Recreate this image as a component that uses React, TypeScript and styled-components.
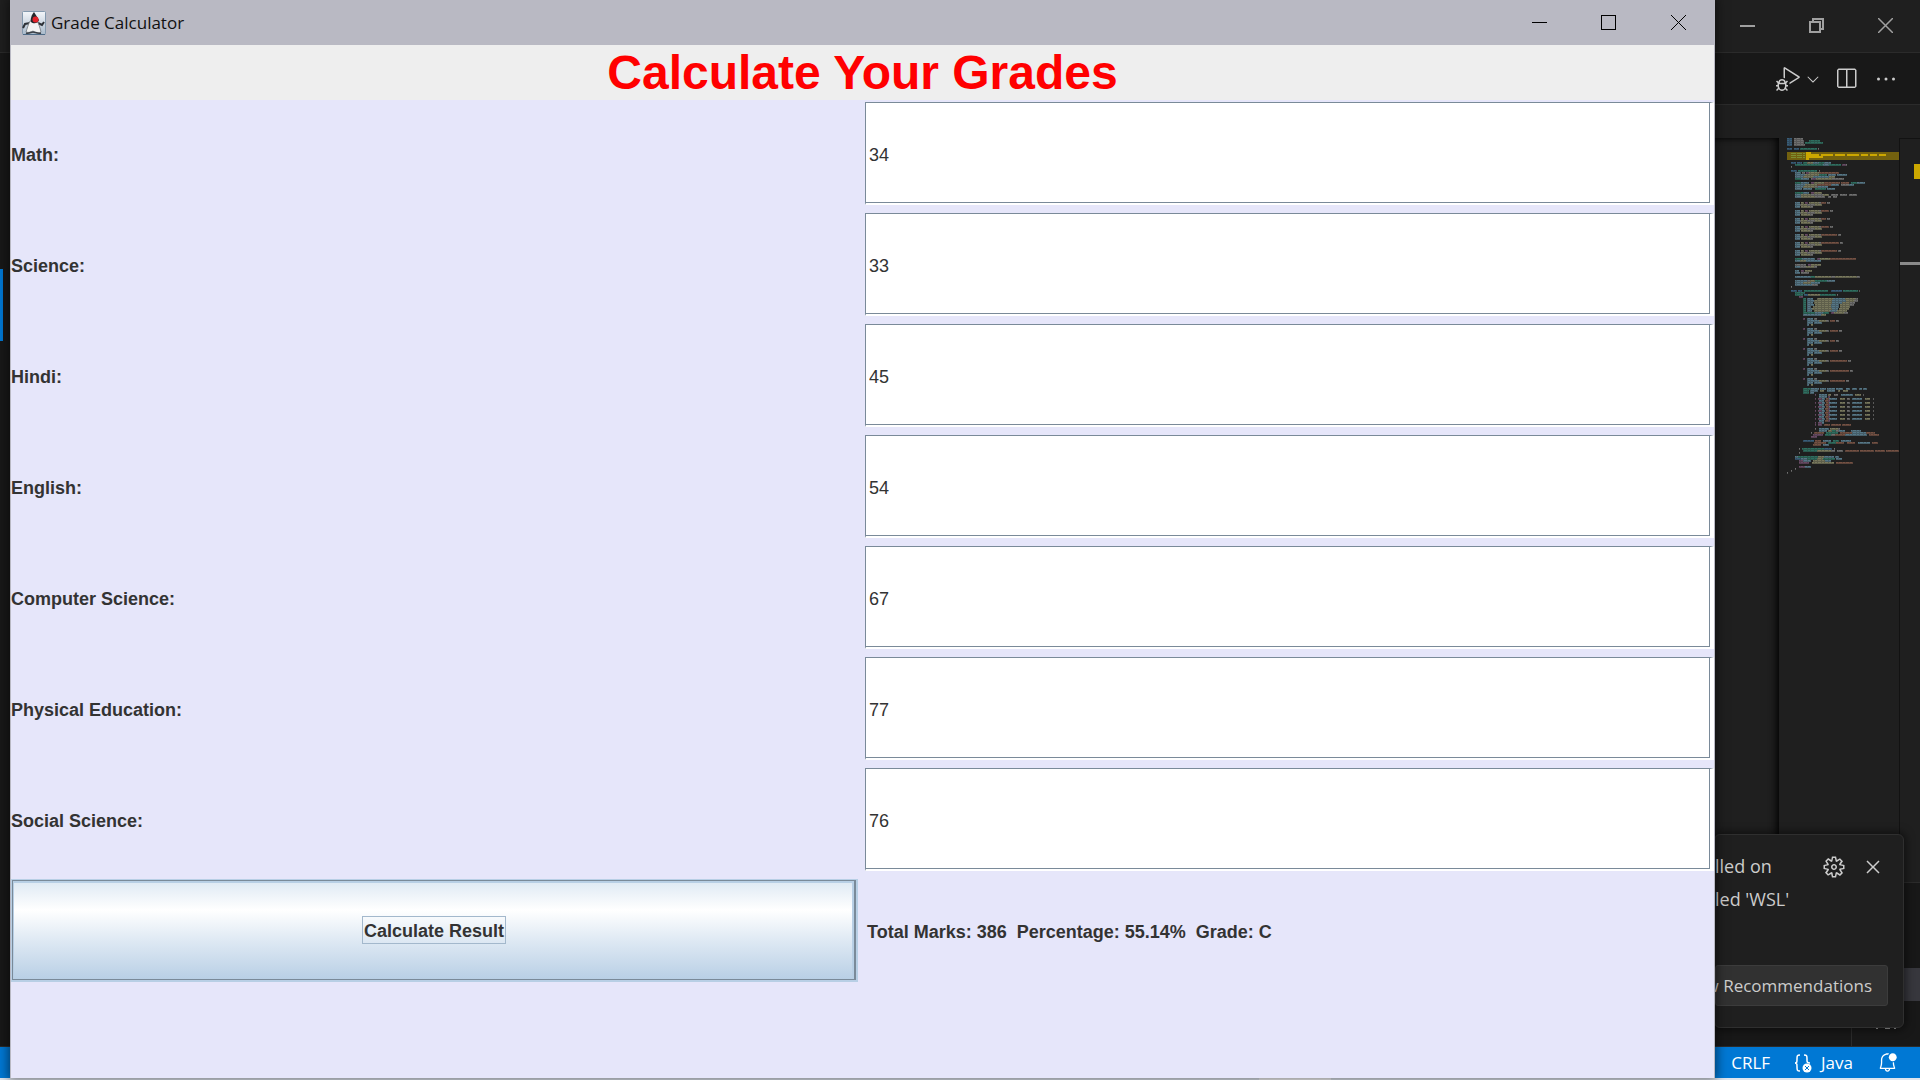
import React, { useState } from "react";
import styled, { createGlobalStyle } from "styled-components";
import {
  VscBellDot,
  VscChevronDown,
  VscClose,
  VscDebugAlt,
  VscEllipsis,
  VscGear,
  VscSplitHorizontal,
} from "react-icons/vsc";

const UI_FONT = `"Segoe UI", "Open Sans", "Noto Sans", sans-serif`;
const SWING_FONT = `"Liberation Sans", Arial, sans-serif`;

const GlobalStyle = createGlobalStyle`
  * { box-sizing: border-box; }
  body { margin: 0; background: #181818; overflow: hidden; }
  button, input { font: inherit; margin: 0; }
`;

/* ---------- desktop and editor ---------- */

const Desktop = styled.div`
  position: relative;
  display: flex;
  flex-direction: column;
  height: 100vh;
  overflow: hidden;
  font-family: ${UI_FONT};
  background: #181818;
`;

const EditorTitleBar = styled.header`
  display: flex;
  justify-content: flex-end;
  height: 53px;
  flex: none;
  padding-bottom: 2px;
  background: #1f1f1f;
  border-bottom: 1px solid #2b2b2b;
`;

const CaptionButton = styled.button<{ $width: number; $color: string }>`
  display: flex;
  align-items: center;
  justify-content: center;
  width: ${(p) => p.$width}px;
  padding: 0;
  border: 0;
  background: none;
  color: ${(p) => p.$color};
`;

const Workbench = styled.div`
  display: flex;
  flex: 1;
  min-height: 0;
  border-bottom: 1px solid #2b2b2b;
`;

const ActivityBar = styled.nav`
  width: 10px;
  padding-top: 216px;
`;

const ActiveMark = styled.div`
  width: 3px;
  height: 72px;
  background: #0078d4;
`;

const EditorGroup = styled.main`
  display: flex;
  flex-direction: column;
  flex: 1;
`;

const EditorToolbar = styled.div`
  display: flex;
  align-items: center;
  justify-content: flex-end;
  gap: 16px;
  height: 52px;
  padding-right: 22px;
  border-bottom: 1px solid #2b2b2b;
`;

const IconButton = styled.button`
  display: flex;
  align-items: center;
  padding: 0;
  border: 0;
  background: none;
  color: #cccccc;
`;

const RunGroup = styled.div`
  display: flex;
  align-items: center;
  gap: 4px;
  margin-right: -4px;
`;

const Breadcrumbs = styled.div`
  height: 33px;
  background: #1f1f1f;
`;

const EditorBody = styled.div`
  display: flex;
  justify-content: flex-end;
  flex: 1;
  min-height: 0;
  background: #1f1f1f;
`;

const CodeArea = styled.div`
  flex: 1;
  box-shadow: inset 0 6px 6px -6px #000, inset -8px 0 8px -6px #000;
`;

const Minimap = styled.div`
  width: 121px;
  padding-left: 8px;
  overflow: hidden;
  border-right: 1px solid #121212;
`;

const Ruler = styled.div`
  display: flex;
  flex-direction: column;
  align-items: flex-end;
  gap: 83px;
  width: 20px;
  padding-top: 25px;
  border-top: 1px solid #121212;
`;

const RulerWarning = styled.div`
  width: 6px;
  height: 15px;
  background: #cca700;
`;

const RulerCursor = styled.div`
  width: 20px;
  height: 3px;
  background: #8a8a8a;
`;

const Panel = styled.section`
  display: flex;
  flex-direction: column;
  align-items: flex-end;
  height: 164px;
  flex: none;
  padding-top: 85px;
  border-top: 1px solid #2b2b2b;
`;

const PanelRow = styled.div`
  width: 69px;
  height: 33px;
  background: #37373d;
`;

const PanelTab = styled.div`
  display: flex;
  justify-content: flex-end;
  flex: 1;
  width: 69px;
  padding: 27px 23px 0 0;
  border-left: 1px solid #2b2b2b;
`;

const StatusBar = styled.footer`
  display: flex;
  align-items: center;
  justify-content: flex-end;
  height: 31px;
  flex: none;
  padding-right: 22px;
  background: #0078d4;
  color: #ffffff;
  font-size: 17px;
`;

const StatusItem = styled.button`
  display: flex;
  align-items: center;
  gap: 9px;
  margin-left: 24px;
  padding: 0;
  border: 0;
  background: none;
  color: inherit;
`;

const TaskbarEdge = styled.div`
  display: flex;
  justify-content: flex-end;
  height: 2px;
  flex: none;
  padding-right: 589px;
  background: #dfe5ee;
`;

const TaskbarActive = styled.div`
  width: 72px;
  background: #f8f8fa;
`;

/* ---------- notification ---------- */

const Toast = styled.aside`
  position: absolute;
  right: 16px;
  bottom: 52px;
  display: flex;
  flex-direction: column;
  justify-content: space-between;
  width: 190px;
  height: 194px;
  padding: 15px 15px 21px 0;
  border: 1px solid #2f2f2f;
  border-radius: 6px;
  background: #1f1f1f;
  box-shadow: 0 0 8px 2px rgba(0, 0, 0, 0.5);
  color: #cccccc;
  font-size: 18px;
  line-height: 33px;
`;

const ToastTop = styled.div`
  display: flex;
  justify-content: space-between;
  align-items: flex-start;
`;

const ToastText = styled.p`
  margin: 0;
  white-space: pre;
`;

const ToastActions = styled.div`
  display: flex;
  gap: 15px;
  padding-right: 3px;
  height: 33px;
`;

const ToastButton = styled.button`
  display: flex;
  justify-content: flex-end;
  align-items: center;
  height: 41px;
  padding: 0 15px;
  border: 1px solid #3c3c3c;
  border-radius: 3px;
  background: #313131;
  color: #cccccc;
  font-size: 17px;
  white-space: nowrap;
`;

/* ---------- calculator window ---------- */

const Window = styled.section`
  position: absolute;
  top: 0;
  left: 10px;
  right: 205px;
  bottom: 2px;
  display: flex;
  flex-direction: column;
  overflow: hidden;
  border: solid #b9b9c3;
  border-width: 0 1px;
  background: #e6e6fa;
  box-shadow: 0 0 10px 2px rgba(0, 0, 0, 0.5);
`;

const WindowBar = styled.header`
  display: flex;
  align-items: stretch;
  height: 45px;
  flex: none;
  background: #b9b9c3;
`;

const WindowCaption = styled.div`
  display: flex;
  align-items: center;
  flex: 1;
  gap: 5px;
  padding-left: 11px;
  color: #111111;
  font-size: 17px;
`;

const Heading = styled.h1`
  margin: 0;
  height: 55px;
  flex: none;
  background: #eeeeee;
  color: #ff0000;
  font: bold 48px/55px ${SWING_FONT};
  text-align: center;
`;

const Form = styled.form`
  display: grid;
  grid-template-columns: 1fr 1fr;
  grid-auto-rows: 103px;
  gap: 8px 5px;
  padding-top: 2px;
  color: #333333;
  font: bold 18px/22px ${SWING_FONT};
`;

const FieldLabel = styled.label`
  display: flex;
  align-items: center;
  padding-top: 2px;
`;

const Field = styled.input`
  width: 100%;
  padding: 4px 3px 0;
  border: solid #7a8a99;
  border-width: 1px 4px 2px 1px;
  border-right-color: #ffffff;
  border-bottom-color: #ffffff;
  border-radius: 0;
  outline: 0;
  background: #ffffff;
  box-shadow: inset -1px -1px #7a8a99;
  color: #333333;
  font-weight: normal;
`;

const CalculateButton = styled.button`
  display: flex;
  align-items: center;
  justify-content: center;
  margin-right: 2px;
  padding: 0;
  border: solid #b8cfe5;
  border-width: 1px 2px 2px 1px;
  background: linear-gradient(#dde8f3, #ffffff 30%, #dde8f3 62%, #b8cfe5);
  box-shadow: inset 1px 1px #7a8a99, inset -2px -1px #7a8a99,
    inset 2px 3px #b8cfe5, inset -4px -1px #b8cfe5;
  color: #333333;
`;

const FocusFrame = styled.span`
  padding: 3px 1px 1px;
  border: 1px solid #a3b8cc;
`;

const Result = styled.output`
  display: flex;
  align-items: center;
  padding: 2px 0 0 2px;
  white-space: pre;
`;

/* ---------- drawings ---------- */

const DukeIcon = () => (
  <svg width="24" height="24" viewBox="0 0 24 24" aria-hidden="true">
    <defs>
      <linearGradient id="duke-bg" x1="0" y1="0" x2="0" y2="1">
        <stop offset="0" stopColor="#f4f6fa" />
        <stop offset="1" stopColor="#a9bacb" />
      </linearGradient>
    </defs>
    <rect x=".5" y=".5" width="23" height="23" rx="1" fill="url(#duke-bg)" stroke="#8398ad" />
    <path d="M1 23.5h22" stroke="#4d6a86" />
    <path d="M8 12l-5 1-2 4M16 12l4 2 2-3" fill="none" stroke="#2c3036" strokeWidth="2" />
    <path d="M8 10c-2 4-3 8-4 11 3 1 5 0 7-1 3 2 6 3 8 1-1-4-2-8-4-11z" fill="#f3f3f3" stroke="#70767c" strokeWidth=".8" />
    <path d="M12 1l5 8c-1 4-6 4-8 2-1-3 1-8 3-10z" fill="#25272b" />
    <circle cx="13.500" cy="8.500" r="3" fill="#e3222a" />
    <path d="M4 22c3 1 5-1 7-1s5 2 8 1" fill="none" stroke="#3b4047" strokeWidth="1.500" />
  </svg>
);

const Minimize = ({ weight }: { weight: number }) => (
  <svg width="15" height="15" aria-hidden="true">
    <rect y="7" width="15" height={weight} fill="currentColor" />
  </svg>
);

const Maximize = () => (
  <svg width="15" height="15" aria-hidden="true">
    <rect x=".5" y=".5" width="14" height="14" fill="none" stroke="currentColor" />
  </svg>
);

const Restore = () => (
  <svg width="15" height="15" aria-hidden="true" fill="none" stroke="currentColor" strokeWidth="2">
    <rect x="1" y="4" width="10" height="10" />
    <path d="M4 3V1h10v10h-3" />
  </svg>
);

const Cross = ({ weight }: { weight: number }) => (
  <svg width="15" height="15" aria-hidden="true" stroke="currentColor" strokeWidth={weight}>
    <path d="M0 0l15 15M15 0L0 15" />
  </svg>
);

const JavaStatus = () => (
  <svg width="18" height="20" viewBox="0 0 18 20" fill="none" stroke="currentColor" strokeWidth="1.500" aria-hidden="true">
    <path d="M6 2C3 2 3 3 3 6s0 4-2 4c2 0 2 1 2 4s0 4 3 4M10 2c3 0 3 1 3 4v2c0 1 1 2 3 2" />
    <circle cx="13" cy="15" r="4.500" fill="currentColor" stroke="none" />
    <path d="M11 13l4 4M15 13l-4 4" stroke="#0078d4" strokeWidth="1" />
  </svg>
);

const TabEdge = () => (
  <svg width="22" height="2" viewBox="0 0 22 2" fill="#9a9a9a" aria-hidden="true">
    <path d="M1 0h2v1H1zM10 0h5v1h-5zM19 0h2v1h-2z" />
  </svg>
);

const INK: Record<string, string> = {
  b: "#4b87b8",
  g: "#a9a9a9",
  t: "#3aa68d",
  c: "#7db4d0",
  y: "#b8b888",
  o: "#b0745c",
  p: "#9a6a96",
};

// One entry per source line: top, indent, then ink letter + length; "_" skips columns.
const createBlock = (top: number, tail: number) => [
  `${top} 8 c5 _1 y3 _1 p3 _1 y10 g2 o${tail} _1 g3`,
  `${top + 2} 8 c5 g1 y6 g8 y7`,
  `${top + 4} 8 c5 _1 y9 g3`,
];

const checkBlock = (top: number, tail: number) => [
  `${top} 16 p2 _2 c6 _1 g3`,
  `${top + 2} 20 c12 y7 g3 _1 o${tail} _1 g3`,
  `${top + 4} 20 c6 _1 c8`,
  `${top + 6} 20 c2 _2 y2`,
];

const gradeRow = (top: number) => [
  `${top} 28 p1 _2 p4 c3 _1 o3 c8 _3 y5 _2 g3 _2 c10 _3 y5 _3 g1`,
  `${top + 2} 32 c5 _1 o3 p2`,
];

const SOURCE = [
  "0 0 b5 _2 g9",
  "2 0 b5 _2 g10 _5 t11",
  "4 0 b5 _2 g10 _1 t18",
  "6 0 b5 _2 g11",
  "10 0 b5 _2 b5 _1 t17 _1 g1",
  "24 4 b5 _1 b5 _1 t4 y6 c6 t5 c7",
  "26 8 t28 c6 t12 _1 p4 g1",
  "28 4 g1",
  "32 4 b6 _1 t19 _2 g1",
  "34 8 c6 _1 g3 _1 p3 y10 o20",
  "36 8 c10 y14 t8 _1 c8 _1 c10",
  "38 8 c8 y10 c16 y6",
  "40 8 t6 c8 _2 g1 p4 y16 g12",
  "44 8 t6 c8 _2 p3 y10 o16 _1 o8 _2 t6 c8",
  "46 8 c10 y12 o14 c8 _2 g8 c5",
  "48 8 c8 y12 g3 c10",
  "50 8 c7 _1 c9 _3 t11 _1 c8",
  "54 8 t8 c6 _2 p3 y8",
  "56 8 c6 y10 g12 y6 _2 g7 _2 g7 _2 g8",
  "58 8 c6 y14 g10 _3 g3 _2 g4",
  ...createBlock(64, 5),
  ...createBlock(72, 8),
  ...createBlock(80, 5),
  ...createBlock(88, 8),
  ...createBlock(96, 16),
  ...createBlock(104, 18),
  ...createBlock(112, 16),
  "120 8 t7 c13 _2 p3 y10 o26",
  "122 8 c5 y6 c15",
  "126 8 g11 _2 p3 y10",
  "128 8 c5 g6 y8 g3",
  "132 8 c4 _2 p3 _1 y7",
  "134 8 c5 _1 g8",
  "138 8 c16 t4 y16 g4 y22 g3",
  "142 8 c12 g3 y5 t12 c8",
  "144 8 c8 y8 c9",
  "146 8 c5 c12 g6",
  "148 4 g1",
  "152 4 b6 _1 b4 _2 t24 _3 b11 _1 t15 _1 g1",
  "154 8 t10",
  "156 8 t8 _1 b4 y12 t16 _1 g1",
  "158 12 p4",
  "160 16 t3 _1 c6 _4 y16 c12 y10 g3",
  "162 16 t3 _1 c7 y18 c14 y8 g4",
  "164 16 t3 _1 c6 _1 y18 c10 y8 g5",
  "166 16 t3 _1 c7 _1 y16 c8 _1 y10 g4",
  "168 16 t3 _1 c4 _2 y18 c8 _1 y10",
  "170 16 t3 _1 c5 y20 c6 _1 y10",
  "172 16 t3 _1 c5 _2 y16 c7 y10",
  "174 16 t12 c8 t6 _2 p3 y10 g4",
  "176 16 c18 y5",
  ...checkBlock(180, 5),
  ...checkBlock(190, 8),
  ...checkBlock(200, 5),
  ...checkBlock(210, 8),
  ...checkBlock(220, 17),
  ...checkBlock(230, 19),
  ...checkBlock(240, 15),
  "250 16 t8 c8 _1 c6 _1 c8 _1 c7 _3 c4 _2 c5 _2 c3 _1 c4",
  "252 16 t6 _1 c8 _2 y4 _3 c8 _3 y2 _3 y5",
  "254 16 t6 _1 c4",
  "256 28 p1 _3 c8 _1 y3 _3 g4 _3 c12 _2 y6 _2 g1",
  "258 32 c8 _1 p2",
  ...gradeRow(260),
  ...gradeRow(264),
  ...gradeRow(268),
  ...gradeRow(272),
  ...gradeRow(276),
  ...gradeRow(280),
  "284 28 p1 _2 p4 c2",
  "286 28 p1 _2 p4 _2 o6 _1 o10 _1 o9",
  "290 28 g1 _3 c10 _1 y8 g2",
  "292 32 c8 _1 y4 t4 g3 c6 _6 c10",
  "294 24 g1 _2 o10 _2 t12 _2 o12 c14 o9",
  "296 26 p10 _2 t6 g4 o10 c22 _2 o10",
  "298 24 p6",
  "302 16 b11 _1 o6 _2 c8 _2 t6 _2 c10",
  "304 27 o12 _2 t8 o8 _3 o8 _3 c12 _2 o6",
  "306 26 o8 _2 c6",
  "310 12 g1 _2 t22 b8 _2 g1",
  "312 16 t14 y14 g4 _2 g6 _2 o14 _1 o14 _1 o10 _1 o13",
  "314 12 g1",
  "318 8 c3 t20 y6 c10 _1 c4",
  "320 8 b6 c6 t10 y6 t12 _1 c6",
  "322 12 p4 c8 _2 y12 c6",
  "324 12 p10 _3 y22 _2 o17",
  "328 12 p6 c6",
  "330 8 g1",
  "332 4 g1",
  "334 0 g1",
];

const WARNING_MARKS = [
  [19, 14, 5], [19, 16, 13], [19, 18, 17], [34, 16, 12], [48, 16, 10],
  [60, 16, 12], [74, 16, 7], [83, 16, 7], [92, 16, 7], [19, 20, 3],
];

const MinimapDrawing = () => (
  <svg width="112" height="340" viewBox="0 0 112 340" aria-hidden="true">
    <rect y="14" width="112" height="8" fill="#73610f" />
    <path d="M4 15.500h14M4 17.500h14M4 19.500h14" stroke="#7d8f31" strokeDasharray="5 1" />
    {WARNING_MARKS.map(([x, y, w]) => (
      <rect key={`${x}-${y}`} x={x} y={y} width={w} height="2" fill="#cca700" />
    ))}
    {SOURCE.flatMap((line) => {
      const [top, indent, ...runs] = line.split(" ");
      let x = Number(indent);
      return runs.map((run) => {
        const length = Number(run.slice(1));
        const start = x;
        x += length;
        if (run[0] === "_") return null;
        return (
          <g key={`${top}-${start}`} fill="none" stroke={INK[run[0]]}>
            <path d={`M${start} ${Number(top) + 0.5}h${length}`} opacity=".3" strokeDasharray="2 1 3 1" strokeDashoffset={start} />
            <path d={`M${start} ${Number(top) + 1}h${length}`} opacity=".42" strokeWidth="2" />
          </g>
        );
      });
    })}
  </svg>
);

/* ---------- application ---------- */

const SUBJECTS: [string, number][] = [
  ["Math", 34],
  ["Science", 33],
  ["Hindi", 45],
  ["English", 54],
  ["Computer Science", 67],
  ["Physical Education", 77],
  ["Social Science", 76],
];

const gradeFor = (p: number) =>
  p >= 90 ? "A+" : p >= 80 ? "A" : p >= 60 ? "B" : p >= 50 ? "C" : p >= 33 ? "D" : "F";

const describe = (marks: string[]) => {
  const total = marks.reduce((sum, m) => sum + (Number(m) || 0), 0);
  const percentage = total / marks.length;
  return `Total Marks: ${total}  Percentage: ${percentage.toFixed(2)}%  Grade: ${gradeFor(percentage)}`;
};

const Calculator = () => {
  const [marks, setMarks] = useState(SUBJECTS.map(([, mark]) => String(mark)));
  const [result, setResult] = useState(() => describe(marks));

  return (
    <Window>
      <WindowBar>
        <WindowCaption>
          <DukeIcon />
          <span>Grade Calculator</span>
        </WindowCaption>
        <CaptionButton $width={69} $color="#000000" aria-label="Minimize"><Minimize weight={1} /></CaptionButton>
        <CaptionButton $width={69} $color="#000000" aria-label="Maximize"><Maximize /></CaptionButton>
        <CaptionButton $width={71} $color="#000000" aria-label="Close"><Cross weight={1} /></CaptionButton>
      </WindowBar>
      <Heading>Calculate Your Grades</Heading>
      <Form
        onSubmit={(e) => {
          e.preventDefault();
          setResult(describe(marks));
        }}
      >
        {SUBJECTS.map(([name], i) => (
          <React.Fragment key={name}>
            <FieldLabel htmlFor={`mark-${i}`}>{name}:</FieldLabel>
            <Field
              id={`mark-${i}`}
              value={marks[i]}
              onChange={(e) => setMarks(marks.map((m, j) => (j === i ? e.target.value : m)))}
            />
          </React.Fragment>
        ))}
        <CalculateButton type="submit">
          <FocusFrame>Calculate Result</FocusFrame>
        </CalculateButton>
        <Result>{result}</Result>
      </Form>
    </Window>
  );
};

export default function App() {
  return (
    <Desktop>
      <GlobalStyle />
      <EditorTitleBar>
        <CaptionButton $width={69} $color="#a0a0a0" aria-label="Minimize editor"><Minimize weight={2} /></CaptionButton>
        <CaptionButton $width={69} $color="#a0a0a0" aria-label="Restore editor"><Restore /></CaptionButton>
        <CaptionButton $width={69} $color="#a0a0a0" aria-label="Close editor"><Cross weight={1.5} /></CaptionButton>
      </EditorTitleBar>
      <Workbench>
        <ActivityBar><ActiveMark /></ActivityBar>
        <EditorGroup>
          <EditorToolbar>
            <RunGroup>
              <IconButton aria-label="Run or debug"><VscDebugAlt size={24} /></IconButton>
              <IconButton aria-label="Run options"><VscChevronDown size={18} /></IconButton>
            </RunGroup>
            <IconButton aria-label="Split editor"><VscSplitHorizontal size={24} /></IconButton>
            <IconButton aria-label="More actions"><VscEllipsis size={24} /></IconButton>
          </EditorToolbar>
          <Breadcrumbs />
          <EditorBody>
            <CodeArea />
            <Minimap><MinimapDrawing /></Minimap>
            <Ruler>
              <RulerWarning />
              <RulerCursor />
            </Ruler>
          </EditorBody>
          <Panel>
            <PanelRow />
            <PanelTab><TabEdge /></PanelTab>
          </Panel>
        </EditorGroup>
      </Workbench>
      <StatusBar>
        <StatusItem>CRLF</StatusItem>
        <StatusItem><JavaStatus />Java</StatusItem>
        <StatusItem aria-label="Notifications"><VscBellDot size={21} /></StatusItem>
      </StatusBar>
      <TaskbarEdge><TaskbarActive /></TaskbarEdge>
      <Toast>
        <ToastTop>
          <ToastText>{"lled on\nled 'WSL'"}</ToastText>
          <ToastActions>
            <IconButton aria-label="Notification settings"><VscGear size={24} /></IconButton>
            <IconButton aria-label="Dismiss"><VscClose size={24} /></IconButton>
          </ToastActions>
        </ToastTop>
        <ToastButton>w Recommendations</ToastButton>
      </Toast>
      <Calculator />
    </Desktop>
  );
}
